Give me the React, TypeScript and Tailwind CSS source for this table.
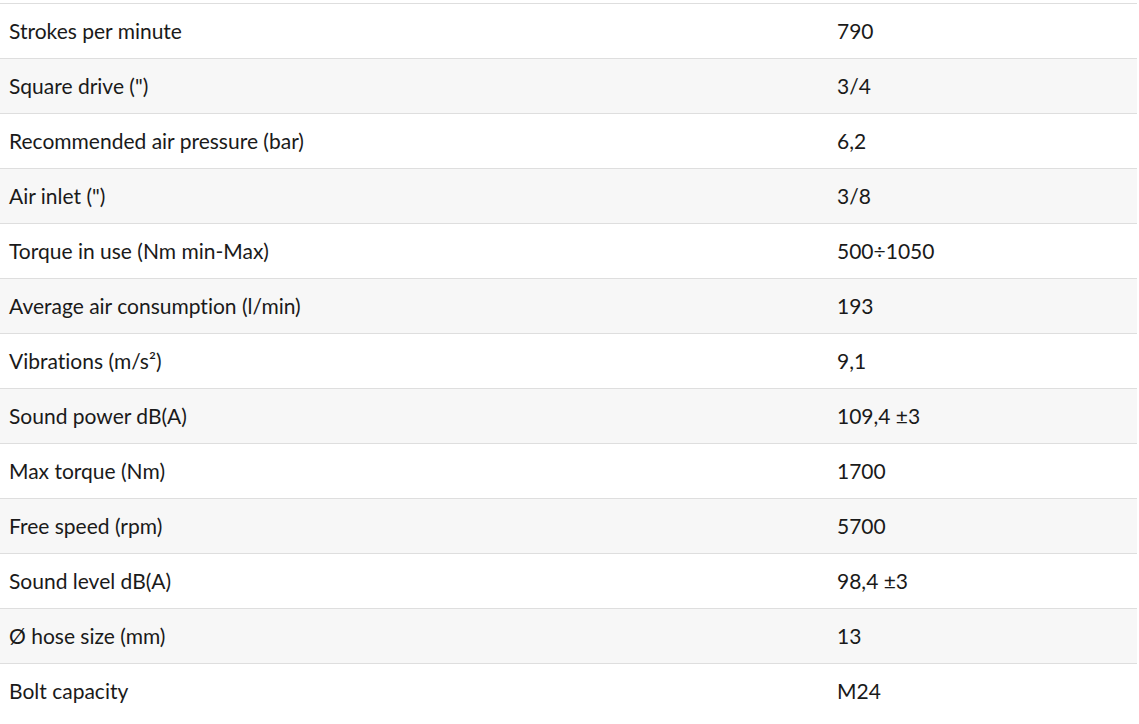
import React from 'react';

const SPECS: [string, string][] = [
  ['Strokes per minute', '790'],
  ['Square drive (")', '3/4'],
  ['Recommended air pressure (bar)', '6,2'],
  ['Air inlet (")', '3/8'],
  ['Torque in use (Nm min-Max)', '500÷1050'],
  ['Average air consumption (l/min)', '193'],
  ['Vibrations (m/s²)', '9,1'],
  ['Sound power dB(A)', '109,4 ±3'],
  ['Max torque (Nm)', '1700'],
  ['Free speed (rpm)', '5700'],
  ['Sound level dB(A)', '98,4 ±3'],
  ['Ø hose size (mm)', '13'],
  ['Bolt capacity', 'M24'],
];

export default function App() {
  return (
    <div className="min-h-screen bg-white pt-[3px] font-['Lato',sans-serif] text-[#1a1a1a] [font-variant-ligatures:none]">
      <div className="w-[1137px]">
        {SPECS.map(([label, value], i) => (
          <div
            key={label}
            className={`flex h-[55px] items-center border-t border-[#dedede] text-[21px] ${
              i % 2 === 1 ? 'bg-[#f7f7f7]' : 'bg-white'
            }`}
          >
            <div className="w-[828px] pl-[9px]">{label}</div>
            <div className="flex-1 pl-[9px]">{value}</div>
          </div>
        ))}
      </div>
    </div>
  );
}
